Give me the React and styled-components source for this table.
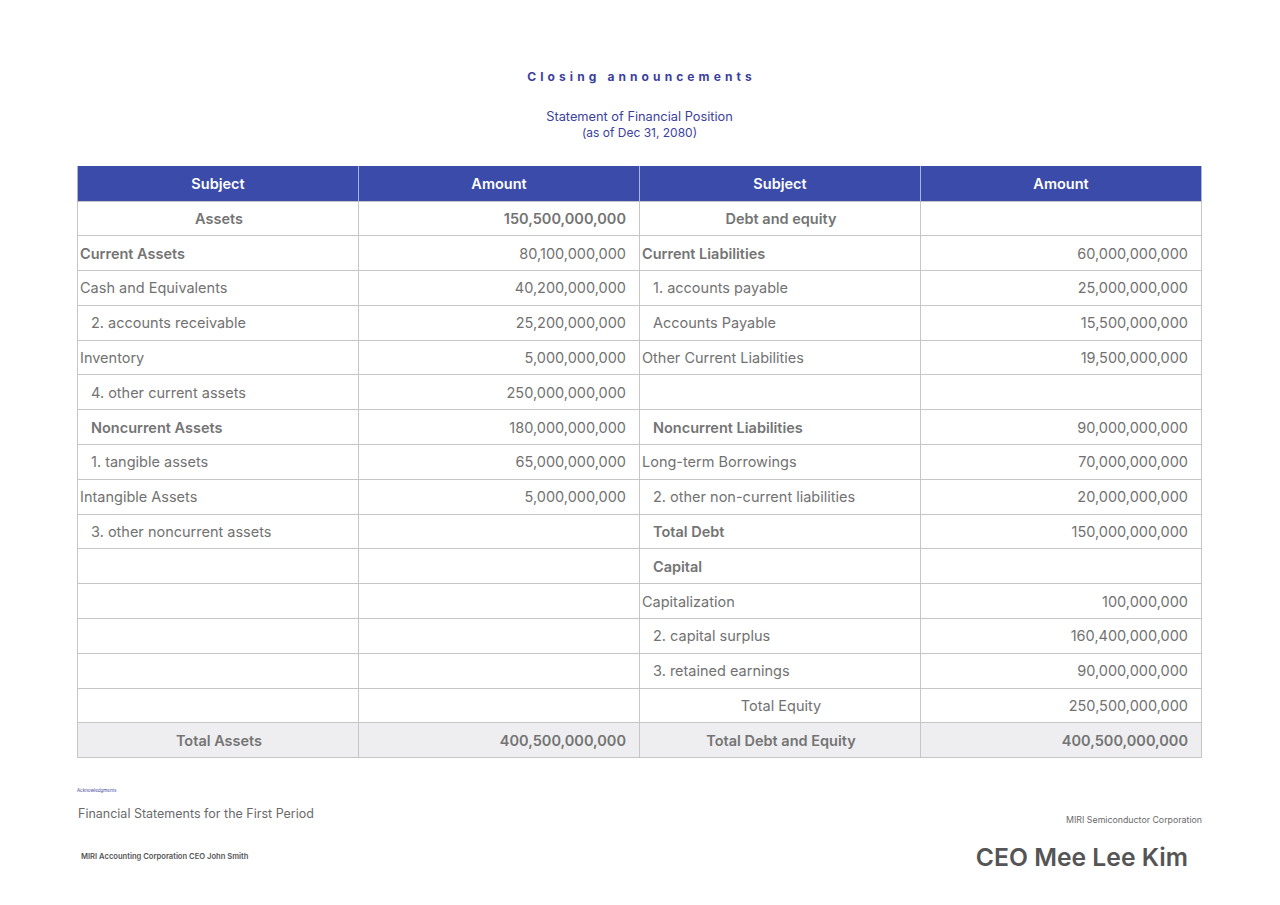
import React from "react";
import styled, { createGlobalStyle } from "styled-components";

const Global = createGlobalStyle`
  html, body { margin: 0; padding: 0; background: #ffffff; }
  body { font-family: Inter, "Noto Sans", sans-serif; -webkit-font-smoothing: antialiased; }
`;

const Page = styled.div`
  width: 1280px;
  height: 905px;
  box-sizing: border-box;
  padding: 70px 78px 0 77px;
  display: flex;
  flex-direction: column;
`;

const Heading = styled.header`
  display: flex;
  flex-direction: column;
  align-items: center;
  color: #3b3f9e;
`;

const Kicker = styled.h1`
  margin: 0;
  font-size: 12px;
  font-weight: 700;
  letter-spacing: 4.1px;
  line-height: 14px;
  padding-left: 4px;
`;

const Subtitle = styled.div`
  margin-top: 25px;
  font-size: 12.8px;
  line-height: 16px;
`;

const DateLine = styled.div`
  font-size: 12px;
  line-height: 16px;
`;

const Table = styled.table`
  margin-top: 25px;
  width: 1125px;
  border-collapse: collapse;
  table-layout: fixed;
  font-size: 14.5px;
  color: #707070;
`;

const HeadCell = styled.th`
  background: #3a4ba9;
  color: #ffffff;
  font-weight: 600;
  height: 35px;
  padding: 0;
  border-left: 1px solid #a9b4e3;
  border-right: 1px solid #a9b4e3;
  text-align: center;
  box-sizing: border-box;
`;

const Row = styled.tr`
  height: 34.8px;
  background: ${(p) => (p.$total ? "#eeeef0" : "#ffffff")};
`;

const Cell = styled.td`
  border: 1px solid #c6c6c6;
  padding: 0 ${(p) => (p.$num ? "13px" : "0")} 0 ${(p) => (p.$indent ? "13px" : p.$num ? "0" : "2px")};
  text-align: ${(p) => (p.$center ? "center" : p.$num ? "right" : "left")};
  font-weight: ${(p) => (p.$bold ? 600 : 400)};
  white-space: nowrap;
  color: ${(p) => (p.$bold ? "#747474" : "#727272")};
`;

const Footer = styled.footer`
  margin-top: 30px;
  display: flex;
  justify-content: space-between;
  align-items: flex-start;
`;

const FooterLeft = styled.div`
  display: flex;
  flex-direction: column;
`;

const Ack = styled.div`
  font-size: 4.5px;
  color: #3b3f9e;
  line-height: 6px;
`;

const Period = styled.div`
  margin-top: 12px;
  margin-left: 1px;
  font-size: 12.5px;
  color: #6a6a6a;
  line-height: 16px;
`;

const Auditor = styled.div`
  margin-top: 30px;
  margin-left: 4px;
  font-size: 7.6px;
  font-weight: 600;
  color: #555555;
  line-height: 10px;
`;

const FooterRight = styled.div`
  display: flex;
  flex-direction: column;
  align-items: flex-end;
  padding-top: 26px;
`;

const Company = styled.div`
  font-size: 8.8px;
  color: #6a6a6a;
  line-height: 12px;
`;

const Ceo = styled.div`
  margin-top: 16px;
  margin-right: 14px;
  font-size: 24.7px;
  font-weight: 600;
  color: #555555;
  line-height: 30px;
`;

const rows = [
  [{ t: "Assets", center: 1, bold: 1 }, { t: "150,500,000,000", bold: 1 }, { t: "Debt and equity", center: 1, bold: 1 }, { t: "" }],
  [{ t: "Current Assets", bold: 1 }, { t: "80,100,000,000" }, { t: "Current Liabilities", bold: 1 }, { t: "60,000,000,000" }],
  [{ t: "Cash and Equivalents" }, { t: "40,200,000,000" }, { t: "1. accounts payable", indent: 1 }, { t: "25,000,000,000" }],
  [{ t: "2. accounts receivable", indent: 1 }, { t: "25,200,000,000" }, { t: "Accounts Payable", indent: 1 }, { t: "15,500,000,000" }],
  [{ t: "Inventory" }, { t: "5,000,000,000" }, { t: "Other Current Liabilities" }, { t: "19,500,000,000" }],
  [{ t: "4. other current assets", indent: 1 }, { t: "250,000,000,000" }, { t: "" }, { t: "" }],
  [{ t: "Noncurrent Assets", indent: 1, bold: 1 }, { t: "180,000,000,000" }, { t: "Noncurrent Liabilities", indent: 1, bold: 1 }, { t: "90,000,000,000" }],
  [{ t: "1. tangible assets", indent: 1 }, { t: "65,000,000,000" }, { t: "Long-term Borrowings" }, { t: "70,000,000,000" }],
  [{ t: "Intangible Assets" }, { t: "5,000,000,000" }, { t: "2. other non-current liabilities", indent: 1 }, { t: "20,000,000,000" }],
  [{ t: "3. other noncurrent assets", indent: 1 }, { t: "" }, { t: "Total Debt", indent: 1, bold: 1 }, { t: "150,000,000,000" }],
  [{ t: "" }, { t: "" }, { t: "Capital", indent: 1, bold: 1 }, { t: "" }],
  [{ t: "" }, { t: "" }, { t: "Capitalization" }, { t: "100,000,000" }],
  [{ t: "" }, { t: "" }, { t: "2. capital surplus", indent: 1 }, { t: "160,400,000,000" }],
  [{ t: "" }, { t: "" }, { t: "3. retained earnings", indent: 1 }, { t: "90,000,000,000" }],
  [{ t: "" }, { t: "" }, { t: "Total Equity", center: 1 }, { t: "250,500,000,000" }],
];

const totalRow = [
  { t: "Total Assets", center: 1, bold: 1 },
  { t: "400,500,000,000", bold: 1 },
  { t: "Total Debt and Equity", center: 1, bold: 1 },
  { t: "400,500,000,000", bold: 1 },
];

function renderCells(cells) {
  return cells.map((c, i) => (
    <Cell
      key={i}
      $num={i % 2 === 1}
      $center={!!c.center}
      $bold={!!c.bold}
      $indent={!!c.indent}
    >
      {c.t}
    </Cell>
  ));
}

export default function App() {
  return (
    <>
      <Global />
      <Page>
        <Heading>
          <Kicker>Closing announcements</Kicker>
          <Subtitle>Statement of Financial Position</Subtitle>
          <DateLine>(as of Dec 31, 2080)</DateLine>
        </Heading>
        <Table>
          <thead>
            <tr>
              <HeadCell>Subject</HeadCell>
              <HeadCell>Amount</HeadCell>
              <HeadCell>Subject</HeadCell>
              <HeadCell>Amount</HeadCell>
            </tr>
          </thead>
          <tbody>
            {rows.map((r, i) => (
              <Row key={i}>{renderCells(r)}</Row>
            ))}
            <Row $total>{renderCells(totalRow)}</Row>
          </tbody>
        </Table>
        <Footer>
          <FooterLeft>
            <Ack>Acknowledgments</Ack>
            <Period>Financial Statements for the First Period</Period>
            <Auditor>MIRI Accounting Corporation CEO John Smith</Auditor>
          </FooterLeft>
          <FooterRight>
            <Company>MIRI Semiconductor Corporation</Company>
            <Ceo>CEO Mee Lee Kim</Ceo>
          </FooterRight>
        </Footer>
      </Page>
    </>
  );
}
